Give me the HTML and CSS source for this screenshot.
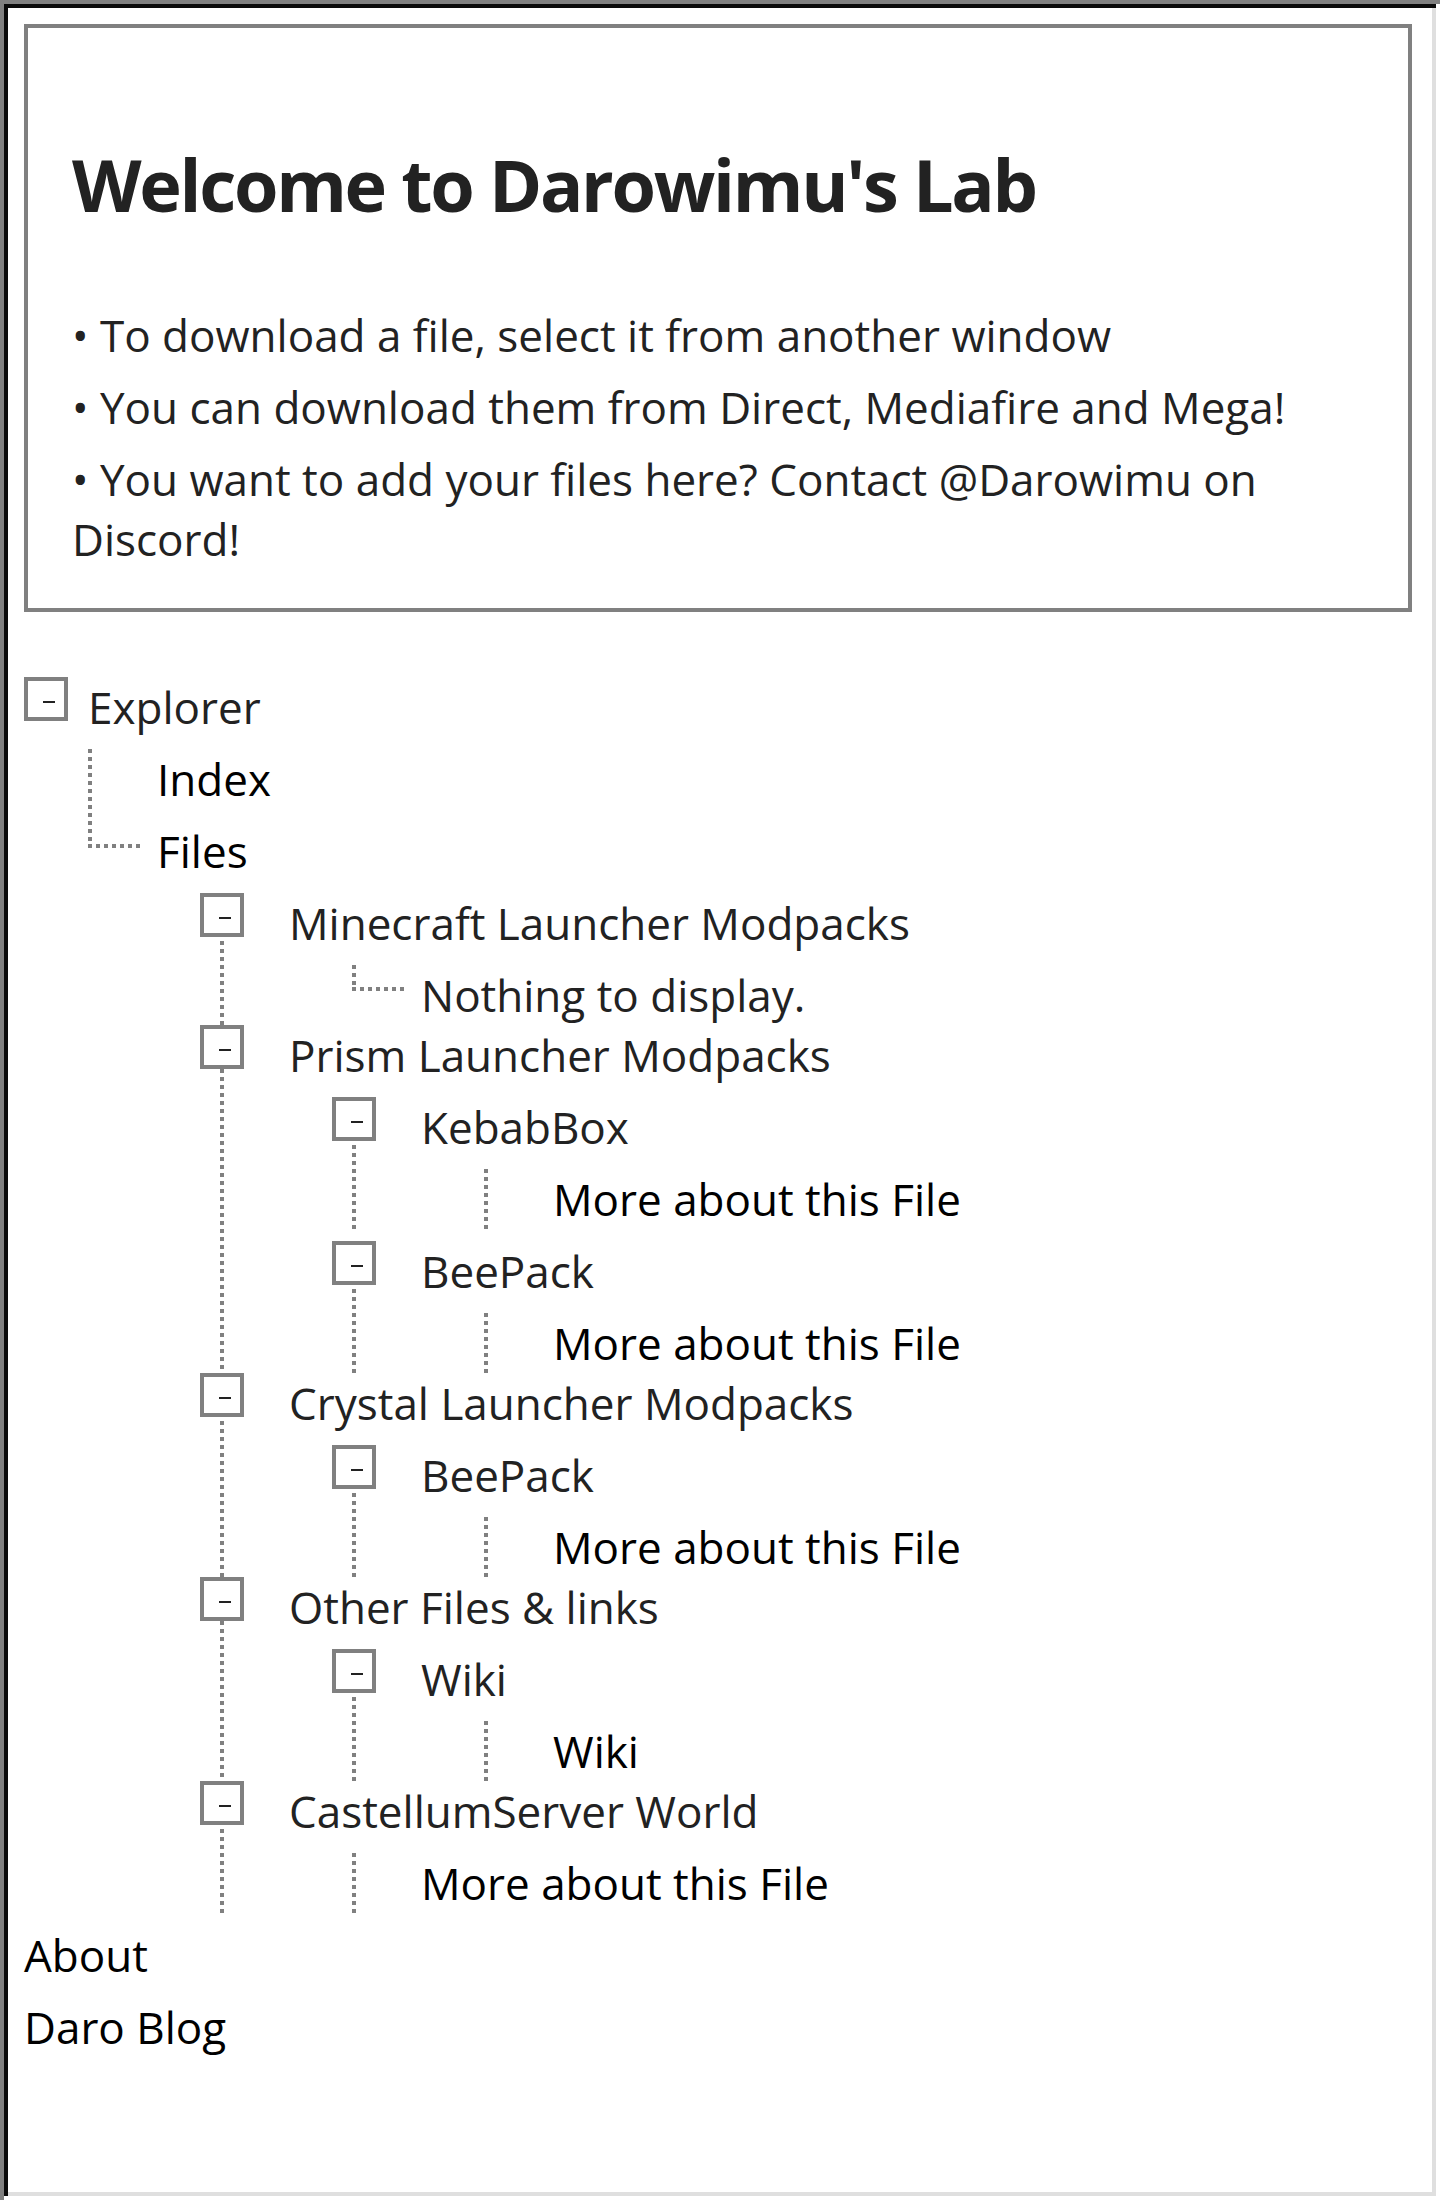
FILE: index.html
```html
<!DOCTYPE html>
<html lang="en">
<head>
<meta charset="utf-8">
<title>Darowimu's Lab</title>
<link rel="stylesheet" href="styles.css">
</head>
<body>
<div class="window">
  <section class="welcome">
    <h1>Welcome to Darowimu's Lab</h1>
    <p>• To download a file, select it from another window</p>
    <p>• You can download them from Direct, Mediafire and Mega!</p>
    <p>• You want to add your files here? Contact @Darowimu on Discord!</p>
  </section>

  <ul class="tree">
    <li class="root">
      <div class="row"><span class="toggle root-toggle"></span><span class="label">Explorer</span></div>
      <ul class="branch root-branch">
        <li><div class="row"><a class="link" href="#">Index</a></div></li>
        <li class="elbow-h">
          <div class="row"><a class="link" href="#">Files</a></div>
          <ul class="branch">
            <li class="line">
              <div class="group">
                <div class="row"><span class="toggle"></span><span class="label">Minecraft Launcher Modpacks</span></div>
                <ul class="branch">
                  <li class="elbow"><div class="row"><span class="label">Nothing to display.</span></div></li>
                </ul>
              </div>
              <div class="group">
                <div class="row"><span class="toggle"></span><span class="label">Prism Launcher Modpacks</span></div>
                <ul class="branch">
                  <li class="line">
                    <div class="row"><span class="toggle"></span><span class="label">KebabBox</span></div>
                    <ul class="branch">
                      <li class="line"><div class="row"><a class="link" href="#">More about this File</a></div></li>
                    </ul>
                  </li>
                  <li class="line">
                    <div class="row"><span class="toggle"></span><span class="label">BeePack</span></div>
                    <ul class="branch">
                      <li class="line"><div class="row"><a class="link" href="#">More about this File</a></div></li>
                    </ul>
                  </li>
                </ul>
              </div>
              <div class="group">
                <div class="row"><span class="toggle"></span><span class="label">Crystal Launcher Modpacks</span></div>
                <ul class="branch">
                  <li class="line">
                    <div class="row"><span class="toggle"></span><span class="label">BeePack</span></div>
                    <ul class="branch">
                      <li class="line"><div class="row"><a class="link" href="#">More about this File</a></div></li>
                    </ul>
                  </li>
                </ul>
              </div>
              <div class="group">
                <div class="row"><span class="toggle"></span><span class="label">Other Files &amp; links</span></div>
                <ul class="branch">
                  <li class="line">
                    <div class="row"><span class="toggle"></span><span class="label">Wiki</span></div>
                    <ul class="branch">
                      <li class="line"><div class="row"><a class="link" href="#">Wiki</a></div></li>
                    </ul>
                  </li>
                </ul>
              </div>
              <div class="group">
                <div class="row"><span class="toggle"></span><span class="label">CastellumServer World</span></div>
                <ul class="branch">
                  <li class="line"><div class="row"><a class="link" href="#">More about this File</a></div></li>
                </ul>
              </div>
            </li>
          </ul>
        </li>
      </ul>
    </li>
    <li><div class="row"><a class="link" href="#">About</a></div></li>
    <li><div class="row"><a class="link" href="#">Daro Blog</a></div></li>
  </ul>
</div>
</body>
</html>
```

FILE: styles.css
```css
* {
  box-sizing: border-box;
}

html,
body {
  margin: 0;
  padding: 0;
  background: #ffffff;
}

body {
  font-family: "Open Sans", "Noto Sans", sans-serif;
  font-size: 44px;
  color: #222222;
}

.window {
  min-height: 100vh;
  padding: 24px 28px 24px 24px;
  background: #ffffff;
  box-shadow:
    inset 4px 4px #808080,
    inset -4px -4px #ffffff,
    inset 8px 8px #0a0a0a,
    inset -8px -8px #dfdfdf;
}

/* Welcome box */
.welcome {
  border: 4px solid #808080;
  padding: 116px 44px 39px 44px;
}

.welcome h1 {
  margin: 0 0 81px;
  font-size: 72px;
  font-weight: 700;
  line-height: 80px;
  letter-spacing: -2.3px;
  color: #222222;
}

.welcome p {
  margin: 12px 0 0;
  line-height: 60px;
}

/* Tree */
.tree,
.tree ul {
  list-style: none;
  margin: 0;
  padding: 0;
}

.tree {
  margin-top: 65px;
}

.tree li {
  margin-top: 12px;
}

.row {
  display: flex;
  align-items: flex-start;
  height: 60px;
  line-height: 60px;
  white-space: nowrap;
}

.label {
  color: #222222;
}

.link {
  color: #000000;
  text-decoration: none;
}

.toggle {
  flex: none;
  display: flex;
  align-items: center;
  justify-content: center;
  width: 44px;
  height: 44px;
  margin: 0 45px 0 -89px;
  border: 4px solid #808080;
  background: #ffffff;
}

.toggle::before {
  content: "";
  width: 12px;
  height: 2px;
  margin: 6px 0 0 6px;
  background: #222222;
}

.tree > .root {
  padding-left: 64px;
}

.tree .root-toggle {
  margin: 0 20px 0 -64px;
}

.tree .branch {
  margin-left: 63px;
}

.tree .branch > li {
  padding-left: 69px;
}

.tree .root-branch {
  margin-left: 0;
  background: repeating-linear-gradient(to bottom, #808080 0 4px, transparent 4px 8px) 0 0 / 4px 99px no-repeat;
}

.tree .line {
  background: repeating-linear-gradient(to bottom, #808080 0 4px, transparent 4px 8px) 0 0 / 4px 100% no-repeat;
}

.tree .elbow {
  background:
    repeating-linear-gradient(to bottom, #808080 0 4px, transparent 4px 8px) 0 0 / 4px 26px no-repeat,
    repeating-linear-gradient(to right, #808080 0 4px, transparent 4px 8px) 0 22px / 52px 4px no-repeat;
}

.tree .elbow-h {
  background: repeating-linear-gradient(to right, #808080 0 4px, transparent 4px 8px) 0 23px / 52px 4px no-repeat;
}
```
